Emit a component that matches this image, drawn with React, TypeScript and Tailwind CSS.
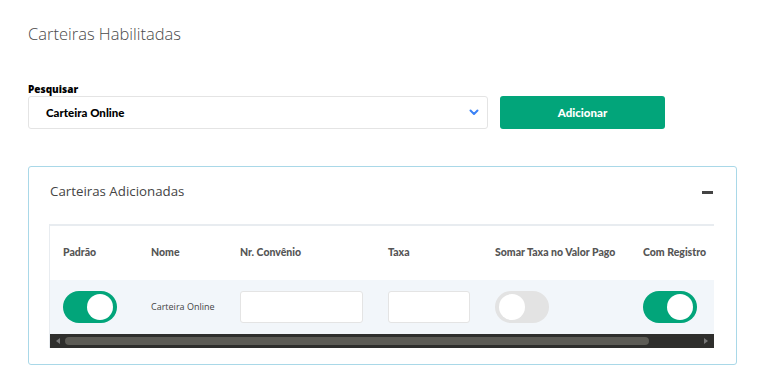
import React, { useState } from 'react';

const font = { fontFamily: '"Open Sans", "Liberation Sans", sans-serif' };
const bold = { fontFamily: 'Lato, "Open Sans", sans-serif' };

const Toggle = ({ on, onClick }: { on: boolean; onClick: () => void }) => (
  <button
    onClick={onClick}
    className={`flex h-[32px] w-[54px] items-center rounded-full px-[4px] ${on ? 'justify-end bg-[#02a57a]' : 'justify-start bg-[#e3e3e3]'}`}
  >
    <span className="h-[26px] w-[26px] rounded-full bg-white" />
  </button>
);

export default function App() {
  const [padrao, setPadrao] = useState(true);
  const [somar, setSomar] = useState(false);
  const [registro, setRegistro] = useState(true);

  return (
    <div className="min-h-screen w-full bg-white text-[#333]" style={font}>
      <div className="px-[28px] pt-[22px]">
        <h1 className="text-[16.5px] font-light leading-[24px] text-[#4a4a4a]">Carteiras Habilitadas</h1>

        {/* busca */}
        <div className="mt-[36px] flex items-end gap-[12px]">
          <div className="w-[460px]">
            <label className="block text-[10px] font-extrabold leading-[14px] text-black">Pesquisar</label>
            <div className="flex h-[33px] items-center justify-between rounded-[3px] border border-[#e4e4e4] pl-[17px] pr-[8px]">
              <span className="text-[11.5px] font-black text-black" style={bold}>Carteira Online</span>
              <svg width="10" height="7" viewBox="0 0 10 7" fill="none">
                <path d="M1.5 1.5 5 5l3.5-3.5" stroke="#3b82f6" strokeWidth="2" strokeLinecap="round" strokeLinejoin="round" />
              </svg>
            </div>
          </div>
          <button className="flex h-[33px] w-[165px] items-center justify-center rounded-[3px] bg-[#02a57a] text-[11.5px] font-black text-white" style={bold}>
            Adicionar
          </button>
        </div>

        {/* carteiras adicionadas */}
        <div className="mt-[37px] w-[709px] rounded-[3px] border border-[#a9d8e8] pl-[20px] pr-[22px] pt-[12px] pb-[16px]">
          <div className="flex h-[26px] items-center justify-between pl-[1px]">
            <h2 className="text-[13.3px] text-[#454545]">Carteiras Adicionadas</h2>
            <span className="mr-[1px] h-[3px] w-[11px] bg-[#444]" />
          </div>

          <div className="mt-[19px] border-l border-t-2 border-[#e8ecf0]">
            <div className="grid h-[54px] grid-cols-[88px_89px_148px_107px_148px_86px] items-center pl-[13px] text-[10.5px] font-black text-[#555]" style={bold}>
              <span>Padrão</span>
              <span>Nome</span>
              <span>Nr. Convênio</span>
              <span>Taxa</span>
              <span>Somar Taxa no Valor Pago</span>
              <span className="whitespace-nowrap">Com Registro</span>
            </div>
            <div className="grid h-[54px] grid-cols-[88px_89px_148px_107px_148px_86px] items-center bg-[#f2f6fa] pl-[13px]">
              <div><Toggle on={padrao} onClick={() => setPadrao(!padrao)} /></div>
              <span className="text-[9px] text-[#444]">Carteira Online</span>
              <div><input className="h-[32px] w-[123px] rounded-[3px] border border-[#e4e4e4] bg-white" /></div>
              <div><input className="h-[32px] w-[82px] rounded-[3px] border border-[#e4e4e4] bg-white" /></div>
              <div><Toggle on={somar} onClick={() => setSomar(!somar)} /></div>
              <div><Toggle on={registro} onClick={() => setRegistro(!registro)} /></div>
            </div>
            <div className="flex h-[14px] items-center gap-[5px] bg-[#2e2e2c] px-[6px]">
              <span className="h-0 w-0 border-y-[3px] border-r-[4px] border-y-transparent border-r-[#777]" />
              <span className="h-[8px] w-[584px] rounded-full bg-[#5c5b55]" />
              <span className="ml-auto h-0 w-0 border-y-[3px] border-l-[4px] border-y-transparent border-l-[#777]" />
            </div>
          </div>
        </div>
      </div>
    </div>
  );
}
